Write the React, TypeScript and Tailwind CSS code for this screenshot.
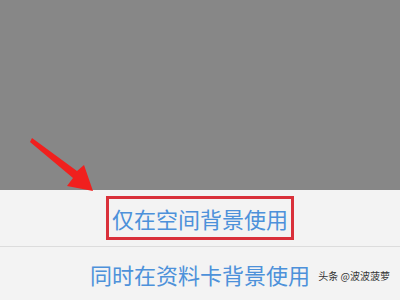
export default function App() {
  return (
    <div
      className="relative w-[400px] h-[300px] overflow-hidden bg-[#f3f3f3]"
      style={{ fontFamily: '"Noto Sans CJK SC", "Noto Sans", sans-serif' }}
    >
      <div className="h-[190px] bg-[#878787]" />
      <div className="flex flex-col">
        <div className="h-[56px] flex items-center justify-center">
          <div className="w-[188px] h-[44px] border-[3px] border-[#d9303a] flex items-center justify-center">
            <span className="text-[22px] leading-none text-[#4d91da]">仅在空间背景使用</span>
          </div>
        </div>
        <div className="h-px bg-[#dcdcdc]" />
        <div className="h-[53px] flex items-center justify-center">
          <span className="text-[22px] leading-none text-[#4d91da]">同时在资料卡背景使用</span>
        </div>
      </div>

      {/* red pointer arrow */}
      <svg className="absolute left-0 top-0" width="120" height="200" viewBox="0 0 120 200">
        <polygon
          points="32,138 77,171 84,165 93,191 67,186 73,178 30,142"
          fill="#f0201e"
        />
      </svg>

      <div className="absolute right-[10px] top-[271px] text-[10px] text-[#333] leading-none">
        头条 @波波菠萝
      </div>
    </div>
  );
}
